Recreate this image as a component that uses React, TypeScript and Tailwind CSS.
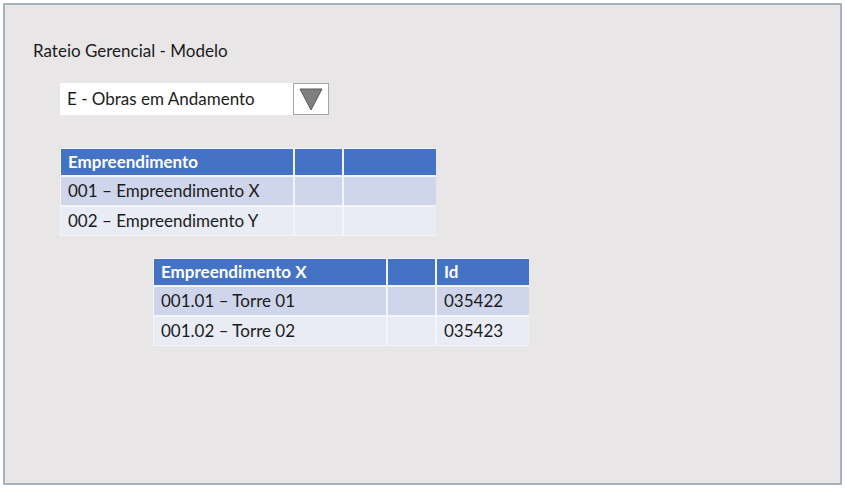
const font = { fontFamily: 'Lato, "Liberation Sans", sans-serif' };

const empreendimentos = ['001 – Empreendimento X', '002 – Empreendimento Y'];

const torres = [
  { nome: '001.01 – Torre 01', id: '035422' },
  { nome: '001.02 – Torre 02', id: '035423' },
];

function Dropdown() {
  return (
    <div className="ml-[27px] mt-[20px] flex h-[32px] w-[269px]">
      <div className="flex w-[233px] items-center bg-white pl-[7px] text-[17px] text-[#1b1b1b]">
        E - Obras em Andamento
      </div>
      <div className="flex w-[36px] items-center justify-center border border-[#a6a6a6] bg-white">
        <svg width="24" height="24" viewBox="0 0 24 24">
          <polygon points="1,2 23,2 12,23" fill="#7f7f7f" stroke="#5a5a5a" strokeWidth="1" />
        </svg>
      </div>
    </div>
  );
}

function Tabela({
  titulo,
  terceira,
  linhas,
  className,
}: {
  titulo: string;
  terceira: string;
  linhas: { a: string; c: string }[];
  className: string;
}) {
  return (
    <div
      className={`grid w-[376px] grid-cols-[232px_47px_92px] gap-[2px] bg-[#f4f5fa] p-[1px] ${className}`}
    >
      <div className="flex h-[26px] items-center bg-[#4472c4] pl-[7px] text-[17px] font-bold text-white">
        {titulo}
      </div>
      <div className="bg-[#4472c4]" />
      <div className="flex items-center bg-[#4472c4] pl-[7px] text-[17px] font-bold text-white">
        {terceira}
      </div>
      {linhas.map((l, i) => {
        const bg = i % 2 === 0 ? 'bg-[#cfd5ea]' : 'bg-[#e9ebf5]';
        return (
          <div key={i} className="contents">
            <div className={`flex h-[28px] items-center pl-[7px] text-[17px] text-[#1b1b1b] ${bg}`}>
              {l.a}
            </div>
            <div className={bg} />
            <div className={`flex items-center pl-[7px] text-[17px] text-[#1b1b1b] ${bg}`}>
              {l.c}
            </div>
          </div>
        );
      })}
    </div>
  );
}

export default function App() {
  return (
    <div className="h-[489px] w-[845px] bg-white pl-[3px] pt-[3px]" style={font}>
      <div className="h-[482px] w-[839px] border-2 border-[#a9b0be] bg-[#e8e6e7] pl-[28px] pt-[34px]">
        <div className="h-[24px] text-[17px] leading-[24px] text-[#1b1b1b]">
          Rateio Gerencial - Modelo
        </div>
        <Dropdown />
        <Tabela
          className="ml-[27px] mt-[33px]"
          titulo="Empreendimento"
          terceira=""
          linhas={empreendimentos.map((e) => ({ a: e, c: '' }))}
        />
        <Tabela
          className="ml-[120px] mt-[22px]"
          titulo="Empreendimento X"
          terceira="Id"
          linhas={torres.map((t) => ({ a: t.nome, c: t.id }))}
        />
      </div>
    </div>
  );
}
